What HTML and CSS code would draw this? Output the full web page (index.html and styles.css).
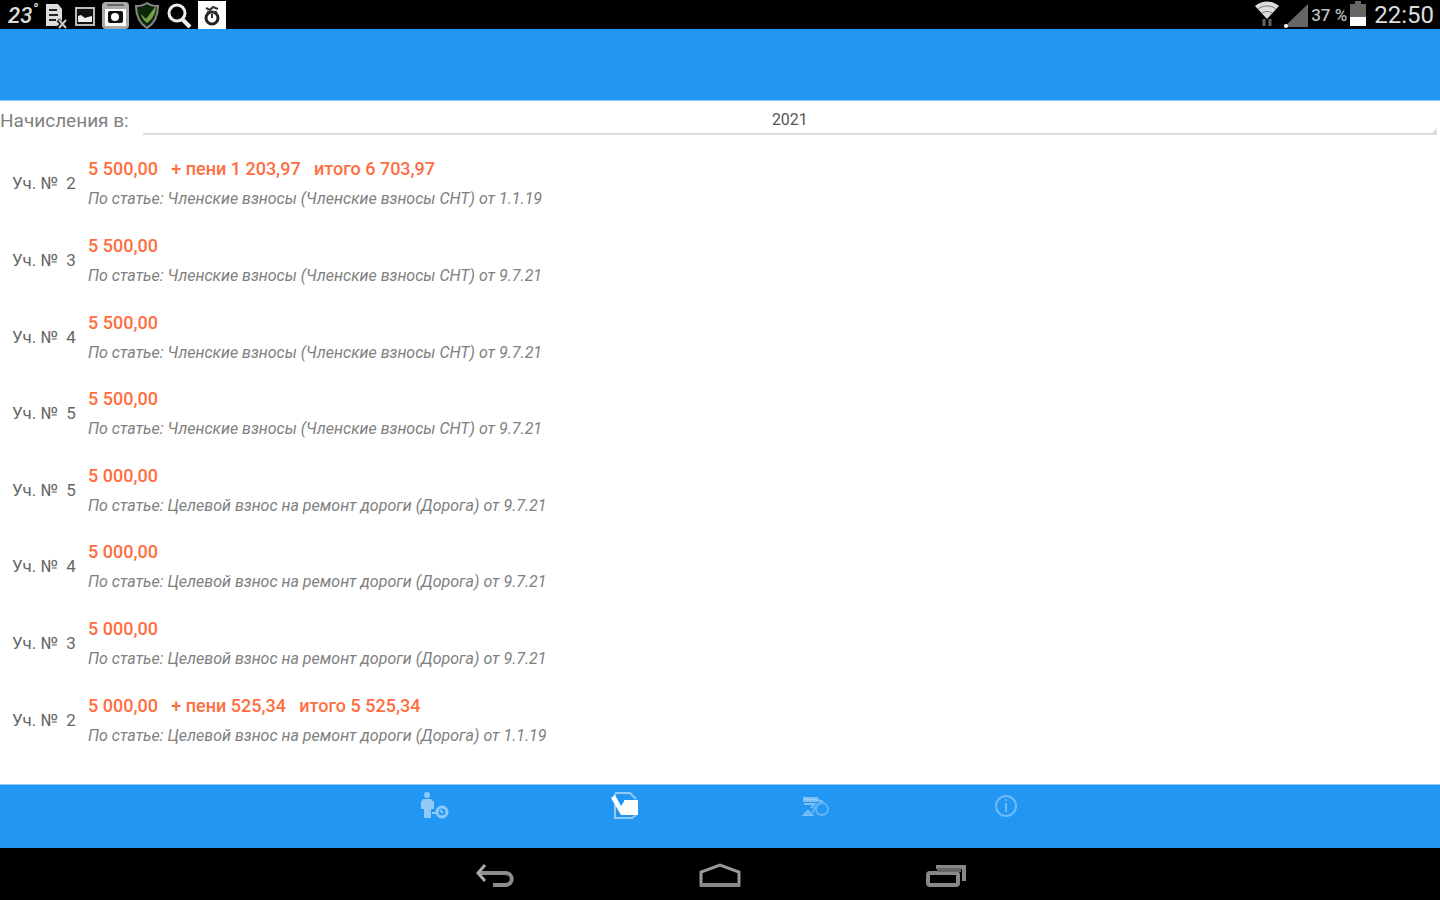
FILE: index.html
```html
<!DOCTYPE html>
<html lang="ru">
<head>
    <meta charset="UTF-8">
    <meta name="viewport" content="width=device-width, initial-scale=1.0">
    <title>Начисления</title>
    <link rel="stylesheet" href="styles.css">
</head>
<body>
    <div class="statusbar">
        <div class="status-left">
            <span class="temp">23<sup>°</sup></span>
            <svg width="26" height="28" viewBox="0 0 26 28"><path d="M3 3h12l4 5v17H3z" fill="#ddd"/><path d="M6 9h8M6 14h9M6 19h7" stroke="#222" stroke-width="2"/><path d="M15 19l9 8M24 19l-9 8" stroke="#000" stroke-width="4"/><path d="M16 19l7 8M23 19l-7 8" stroke="#ccc" stroke-width="2"/></svg>
            <svg width="22" height="28" viewBox="0 0 22 28"><rect x="2" y="7" width="18" height="17" fill="#111" stroke="#bbb" stroke-width="2"/><path d="M4 21v-6l3-1 4 3 3-1 4-1v6z" fill="#eee"/></svg>
            <svg width="28" height="28" viewBox="0 0 28 28"><rect x="1" y="1" width="27" height="27" rx="4" fill="#aaa"/><path d="M4 8h21v17H4z" fill="#fff"/><path d="M6 4h17" stroke="#666" stroke-width="2"/><rect x="7" y="10" width="15" height="12" rx="2" fill="#111"/><circle cx="14" cy="16" r="4" fill="#fff"/></svg>
            <svg width="26" height="28" viewBox="0 0 26 28"><path d="M13 2c3 2 7 3 11 3 0 10-3 17-11 22C5 22 2 15 2 5c4 0 8-1 11-3z" fill="#0d2808" stroke="#888" stroke-width="2"/><path d="M7 13l5 5L22 5c0 7-4 14-9 17-3-2-5-5-6-9z" fill="#78a04b"/></svg>
            <svg width="28" height="28" viewBox="0 0 28 28"><circle cx="12" cy="12" r="8" fill="none" stroke="#eee" stroke-width="3"/><path d="M17 18l8 8" stroke="#eee" stroke-width="4"/></svg>
            <svg width="28" height="28" viewBox="0 0 28 28"><rect width="28" height="28" fill="#fff"/><circle cx="14" cy="17" r="6" fill="none" stroke="#222" stroke-width="3"/><path d="M8 7l4 2 3-3 5 2M9 11h10M14 13v4" fill="none" stroke="#333" stroke-width="2"/></svg>
        </div>
        <div class="status-right">
            <svg width="28" height="28" viewBox="0 0 28 28"><path d="M2 5c7-6 17-6 24 0L14 18z" fill="#ddd"/><path d="M5 8c5-4 13-4 18 0M9 12c3-2 7-2 10 0" fill="none" stroke="#777"/><path d="M11 18v7M17 18v7" stroke="#666" stroke-width="3"/></svg>
            <svg width="26" height="28" viewBox="0 0 26 28"><path d="M25 3v23H1z" fill="#666"/><circle cx="3" cy="25" r="2" fill="#fff"/></svg>
            <span class="percent">37 %</span>
            <svg width="18" height="28" viewBox="0 0 18 28"><path d="M6 0h6v3h5v14H1V3h5z" fill="#666"/><path d="M1 16h16v9H1z" fill="#fff"/></svg>
            <time class="clock">22:50</time>
        </div>
    </div>

    <header class="appbar"></header>

    <main>
        <form class="filter">
            <label for="year">Начисления в:</label>
            <div class="spinner">
                <select id="year">
                    <option>2021</option>
                </select>
            </div>
        </form>

        <ul class="charges">
            <li>
                <span class="plot">Уч. №&nbsp; 2</span>
                <div class="charge">
                    <p class="sum">5 500,00 &nbsp; + пени 1 203,97 &nbsp; итого 6 703,97</p>
                    <p class="article">По статье: Членские взносы (Членские взносы СНТ) от 1.1.19</p>
                </div>
            </li>
            <li>
                <span class="plot">Уч. №&nbsp; 3</span>
                <div class="charge">
                    <p class="sum">5 500,00</p>
                    <p class="article">По статье: Членские взносы (Членские взносы СНТ) от 9.7.21</p>
                </div>
            </li>
            <li>
                <span class="plot">Уч. №&nbsp; 4</span>
                <div class="charge">
                    <p class="sum">5 500,00</p>
                    <p class="article">По статье: Членские взносы (Членские взносы СНТ) от 9.7.21</p>
                </div>
            </li>
            <li>
                <span class="plot">Уч. №&nbsp; 5</span>
                <div class="charge">
                    <p class="sum">5 500,00</p>
                    <p class="article">По статье: Членские взносы (Членские взносы СНТ) от 9.7.21</p>
                </div>
            </li>
            <li>
                <span class="plot">Уч. №&nbsp; 5</span>
                <div class="charge">
                    <p class="sum">5 000,00</p>
                    <p class="article">По статье: Целевой взнос на ремонт дороги (Дорога) от 9.7.21</p>
                </div>
            </li>
            <li>
                <span class="plot">Уч. №&nbsp; 4</span>
                <div class="charge">
                    <p class="sum">5 000,00</p>
                    <p class="article">По статье: Целевой взнос на ремонт дороги (Дорога) от 9.7.21</p>
                </div>
            </li>
            <li>
                <span class="plot">Уч. №&nbsp; 3</span>
                <div class="charge">
                    <p class="sum">5 000,00</p>
                    <p class="article">По статье: Целевой взнос на ремонт дороги (Дорога) от 9.7.21</p>
                </div>
            </li>
            <li>
                <span class="plot">Уч. №&nbsp; 2</span>
                <div class="charge">
                    <p class="sum">5 000,00 &nbsp; + пени 525,34 &nbsp; итого 5 525,34</p>
                    <p class="article">По статье: Целевой взнос на ремонт дороги (Дорога) от 1.1.19</p>
                </div>
            </li>
        </ul>
    </main>

    <nav class="tabs">
        <button type="button" aria-label="Участники">
            <svg width="30" height="30" viewBox="0 0 30 30" fill="#8fcaf9"><circle cx="8" cy="4" r="3"/><path d="M4 8h8l3 3v7h-3v9H5v-9H2v-7z"/><path d="M13 22h4" stroke="#8fcaf9" stroke-width="2"/><circle cx="23" cy="21" r="5" fill="none" stroke="#8fcaf9" stroke-width="3"/><path d="M21 19l3 3" stroke="#8fcaf9" stroke-width="2"/></svg>
        </button>
        <button type="button" aria-label="Начисления">
            <svg width="30" height="30" viewBox="0 0 30 30"><path d="M4 6l2-4h14l6 6M5 13v14h17l4-3" fill="none" stroke="#8fcaf9" stroke-width="2"/><path d="M14 9h14v15H14z" fill="#fff"/><path d="M1 7l4-3 6 11 4-6v15h-4z" fill="#fff"/></svg>
        </button>
        <button type="button" aria-label="Платежи">
            <svg width="30" height="30" viewBox="0 0 30 30" fill="none" stroke="#7fc0f8" stroke-width="2"><path d="M3 7h13v3H3z" fill="#9bd0fa"/><path d="M3 13h10l-3 4M17 9l5 2M3 24l4-4 4 4z"/><circle cx="21" cy="18" r="6" stroke="#64b5f6"/><path d="M12 22c0-4 3-9 8-10" stroke="#64b5f6"/></svg>
        </button>
        <button type="button" aria-label="Информация">
            <svg width="30" height="30" viewBox="0 0 30 30" fill="none" stroke="#70b9f7" stroke-width="2"><circle cx="14" cy="15" r="10"/><path d="M14 8v2M14 12v9"/></svg>
        </button>
    </nav>

    <div class="navbar">
        <button type="button" aria-label="Назад">
            <svg width="44" height="30" viewBox="0 0 44 30" fill="none" stroke="#8c8c8c" stroke-width="4"><path d="M6 12h26c9 0 9 12 0 12H20"/><path d="M12 4l-7 8 7 8" stroke="#aaa" stroke-width="3"/></svg>
        </button>
        <button type="button" aria-label="Домой">
            <svg width="44" height="30" viewBox="0 0 44 30" fill="none" stroke="#999" stroke-width="3"><path d="M3 24V11l19-7 19 7v13z"/><path d="M2 24h40" stroke="#888" stroke-width="4"/></svg>
        </button>
        <button type="button" aria-label="Недавние">
            <svg width="44" height="30" viewBox="0 0 44 30" fill="none" stroke="#888" stroke-width="4"><rect x="5" y="12" width="30" height="12" rx="2"/><path d="M13 6h28v14"/><path d="M14 9h24" stroke="#666"/></svg>
        </button>
    </div>
</body>
</html>
```
FILE: styles.css
```css
* {
    margin: 0;
    padding: 0;
    box-sizing: border-box;
}

body {
    display: flex;
    flex-direction: column;
    min-height: 100vh;
    font-family: Roboto, sans-serif;
    font-size: 16px;
    background-color: #fff;
    color: #808080;
}

svg {
    display: block;
    flex-shrink: 0;
}

button {
    display: flex;
    justify-content: center;
    background: none;
    border: none;
    cursor: pointer;
}

.statusbar {
    display: flex;
    justify-content: space-between;
    height: 29px;
    padding: 0 6px 0 8px;
    background-color: #000;
    color: #ddd;
}

.status-left,
.status-right {
    display: flex;
    align-items: center;
    gap: 5px;
}

.status-right {
    gap: 2px;
}

.temp {
    width: 30px;
    padding-top: 3px;
    font-size: 22px;
    font-style: italic;
    font-weight: 500;
    line-height: 26px;
    white-space: nowrap;
}

.temp sup {
    font-size: 16px;
    line-height: 0;
}

.percent {
    font-size: 17px;
    font-weight: 500;
    color: #bbb;
}

.clock {
    margin-left: 5px;
    font-size: 24px;
    line-height: 28px;
}

.appbar {
    height: 72px;
    background-color: #2196f3;
    border-bottom: 1px solid #90caf9;
}

main {
    flex: 1;
    display: flex;
    flex-direction: column;
    padding-bottom: 26px;
}

.filter {
    display: flex;
    align-items: center;
    gap: 14px;
    height: 44px;
    padding: 0 3px 6px 0;
}

.filter label {
    font-size: 19px;
}

.spinner {
    position: relative;
    flex: 1;
    border-bottom: 2px solid #ddd;
}

/* small corner mark of the drop-down */
.spinner::after {
    content: "";
    position: absolute;
    right: 0;
    bottom: 0;
    border-left: 5px solid transparent;
    border-bottom: 5px solid #ddd;
}

.spinner select {
    display: block;
    width: 100%;
    height: 28px;
    appearance: none;
    border: none;
    background: none;
    font-family: inherit;
    font-size: 16px;
    color: #555;
    text-align-last: center;
}

.charges {
    flex: 1;
    display: flex;
    flex-direction: column;
    list-style: none;
}

.charges li {
    flex: 1;
    display: flex;
    align-items: center;
    gap: 12px;
    padding-left: 12px;
}

.plot {
    width: 64px;
    font-size: 17px;
    white-space: nowrap;
    color: #666;
}

.charge {
    padding-top: 2px;
}

.sum,
.article {
    line-height: 30px;
}

.sum {
    font-size: 18px;
    font-weight: 500;
    color: #ff6e40;
}

.article {
    font-style: italic;
}

.tabs {
    display: flex;
    justify-content: center;
    height: 64px;
    background-color: #2196f3;
    border-top: 1px solid #90caf9;
}

.tabs button {
    width: 191px;
    padding-top: 6px;
}

.navbar {
    display: flex;
    justify-content: center;
    height: 52px;
    background-color: #000;
}

.navbar button {
    width: 225px;
    padding-top: 13px;
}
```
